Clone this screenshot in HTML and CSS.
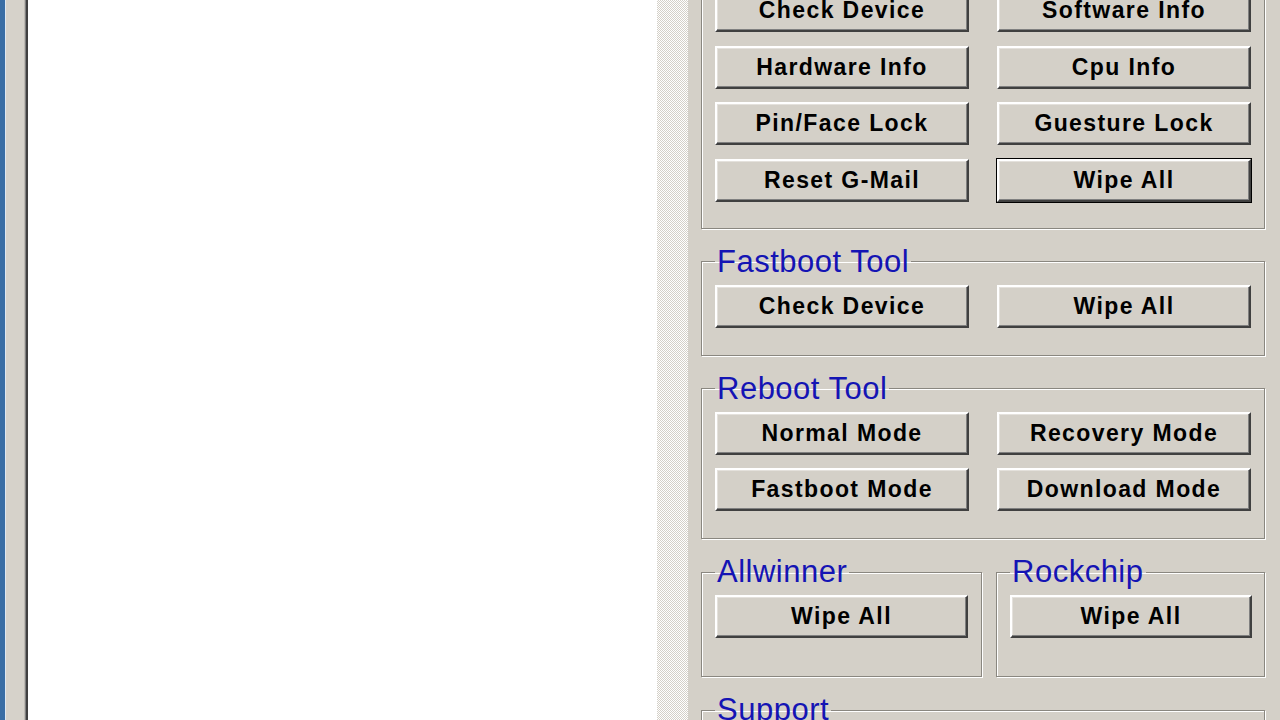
FILE: index.html
```html
<!DOCTYPE html>
<html lang="en">
<head>
  <meta charset="UTF-8"/>
  <title>Android Tool</title>
  <link rel="stylesheet" href="styles.css">
</head>
<body>

  <div class="desk-edge"></div>
  <div class="window-frame"></div>

  <!-- Log / output area -->
  <div class="log-area"></div>
  <div class="scroll-track"></div>

  <!-- Tool panel -->
  <div class="panel">

    <fieldset class="group group-top">
      <div class="btn-grid">
        <button class="btn">Check Device</button>
        <button class="btn">Software Info</button>
        <button class="btn">Hardware Info</button>
        <button class="btn">Cpu Info</button>
        <button class="btn">Pin/Face Lock</button>
        <button class="btn">Guesture Lock</button>
        <button class="btn">Reset G-Mail</button>
        <button class="btn btn-default">Wipe All</button>
      </div>
    </fieldset>

    <fieldset class="group">
      <legend>Fastboot Tool</legend>
      <div class="btn-grid">
        <button class="btn">Check Device</button>
        <button class="btn">Wipe All</button>
      </div>
    </fieldset>

    <fieldset class="group">
      <legend>Reboot Tool</legend>
      <div class="btn-grid">
        <button class="btn">Normal Mode</button>
        <button class="btn">Recovery Mode</button>
        <button class="btn">Fastboot Mode</button>
        <button class="btn">Download Mode</button>
      </div>
    </fieldset>

    <div class="group-row">
      <fieldset class="group group-small allwinner">
        <legend>Allwinner</legend>
        <button class="btn">Wipe All</button>
      </fieldset>
      <fieldset class="group group-small rockchip">
        <legend>Rockchip</legend>
        <button class="btn">Wipe All</button>
      </fieldset>
    </div>

    <fieldset class="group">
      <legend>Support</legend>
      <div class="btn-grid">
        <button class="btn">Help</button>
        <button class="btn">About</button>
      </div>
    </fieldset>

  </div>

</body>
</html>
```

FILE: styles.css
```css
html, body {
  margin: 0;
  height: 720px;
  overflow: hidden;
}

body {
  display: flex;
  background: #d4d0c8;
  font-family: "Liberation Sans", Arial, sans-serif;
}

.desk-edge {
  width: 5px;
  flex: none;
  background: #3a6ea5;
  border-right: 1px solid #dfe8f2;
}

.window-frame {
  width: 19px;
  flex: none;
  background: #d6d2ca;
  border-right: 1px solid #808080;
  box-shadow: inset -1px 0 0 #bdb9b2;
}

.log-area {
  width: 629px;
  flex: none;
  background: #fff;
  border-left: 2px solid #404040;
}

.scroll-track {
  width: 31px;
  flex: none;
  background: repeating-conic-gradient(#d4d0c8 0 25%, #fff 0 50%) 0 0 / 2px 2px;
}

.panel {
  flex: 1;
  padding: 0 15px 0 13px;
  background: #d4d0c8;
}

/* etched group box */
.group {
  margin: 0 0 17px 0;
  padding: 7px 13px 27px 13px;
  border: 1px solid #8a8780;
  box-shadow: inset 1px 1px 0 #fff, 1px 1px 0 #fff;
  min-width: 0;
}

.group legend {
  padding: 0 2px;
  font-size: 31px;
  line-height: 32px;
  letter-spacing: 0.5px;
  color: #1414b4;
}

.group-top {
  margin-top: -25px;
  padding-top: 13px;
  padding-bottom: 26px;
}

.btn-grid {
  display: grid;
  grid-template-columns: 1fr 1fr;
  column-gap: 28px;
  row-gap: 13.5px;
}

.group-row {
  display: flex;
  gap: 14px;
}

.group-small {
  padding-bottom: 38px;
}

.allwinner {
  width: 281px;
  flex: none;
  box-sizing: border-box;
}

.rockchip {
  flex: 1;
  padding-left: 13px;
  padding-right: 12px;
}

.rockchip .btn,
.allwinner .btn {
  width: 100%;
}

/* classic 3D push button */
.btn {
  height: 43px;
  padding: 0;
  background: #d4d0c8;
  border: 2px solid;
  border-color: #fff #404040 #404040 #fff;
  box-shadow: inset -1px -1px 0 #808080, inset 1px 1px 0 #e4e1dc;
  font-family: "Liberation Sans", Arial, sans-serif;
  font-size: 23px;
  font-weight: bold;
  letter-spacing: 1.4px;
  color: #000;
  cursor: pointer;
}

.btn-default {
  outline: 1px solid #000;
  outline-offset: 0;
}
```
